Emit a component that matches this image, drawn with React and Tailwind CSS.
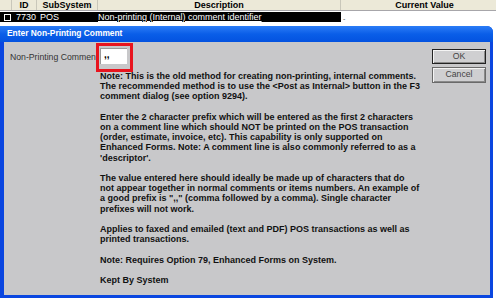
import React from "react";

const paras = [
  ["Note: This is the old method for creating non-printing, internal comments.", "The recommended method is to use the <Post as Internal> button in the F3", "comment dialog (see option 9294)."],
  ["Enter the 2 character prefix which will be entered as the first 2 characters", "on a comment line which should NOT be printed on the POS transaction", "(order, estimate, invoice, etc). This capability is only supported on", "Enhanced Forms. Note: A comment line is also commonly referred to as a", "'descriptor'."],
  ["The value entered here should ideally be made up of characters that do", "not appear together in normal comments or items numbers. An example of", "a good prefix is \",,\" (comma followed by a comma). Single character", "prefixes will not work."],
  ["Applies to faxed and emailed (text and PDF) POS transactions as well as", "printed transactions."],
  ["Note: Requires Option 79, Enhanced Forms on System."],
  ["Kept By System"],
];

export default function App() {
  return (
    <div className="w-[496px] h-[300px] overflow-hidden bg-white relative" style={{ fontFamily: '"Liberation Sans", Arial, sans-serif' }}>
      {/* grid header */}
      <div className="flex h-[11px] bg-[#ece9d8] border-b border-[#a7a6aa] text-[9px] font-bold text-black leading-[10px]">
        <div className="w-[12px] shrink-0 border-r border-[#c9c7ba]" />
        <div className="w-[25px] shrink-0 border-r border-[#c9c7ba] text-center">ID</div>
        <div className="w-[61px] shrink-0 border-r border-[#c9c7ba] text-center">SubSystem</div>
        <div className="w-[243px] shrink-0 border-r border-[#c9c7ba] text-center">Description</div>
        <div className="flex-1 text-center pl-[12px]">Current Value</div>
      </div>
      <div className="flex h-[10px] mt-[1px] text-[9px] leading-[10px]">
        <div className="w-[341px] shrink-0 bg-black text-white flex items-center">
          <div className="w-[14px] shrink-0 flex justify-center">
            <div className="w-[7px] h-[7px] border border-white bg-black" />
          </div>
          <div className="w-[24px] shrink-0 text-left pl-[2px]">7730</div>
          <div className="w-[60px] shrink-0 pl-[2px]">POS</div>
          <div className="flex-1 underline">Non-printing (Internal) comment identifier</div>
        </div>
        <div className="flex-1 bg-white text-[7px] pl-[2px] leading-[14px] text-[#555]">-</div>
      </div>
      {/* dialog */}
      <div className="absolute left-0 top-[26px] w-[493px] h-[272px] bg-[#0a46e0] rounded-tr-[6px] flex flex-col">
        <div className="h-[16px] shrink-0 bg-gradient-to-b from-[#2a7cf6] via-[#0a5ee8] to-[#0452e0] rounded-tr-[6px] pl-[7px] flex items-center pb-[1px] text-white font-bold text-[8.4px]">
          Enter Non-Printing Comment
        </div>
        <div className="flex-1 ml-[4px] mr-[3px] mb-[3px] bg-[#c8c8ca] relative flex">
          <div className="w-[92px] shrink-0 pl-[6px] pt-[10px] text-[8.7px] text-[#333] leading-[10px] whitespace-nowrap">Non-Printing Comment</div>
          <div className="flex-1 flex flex-col">
            <div className="mt-[1px] w-[37px] h-[29px] border-[3px] border-[#e8141e] pl-[1px] pt-[2px]">
              <div className="w-[27px] h-[16px] bg-white border-t border-l border-[#999] text-[10px] font-bold leading-[12px] pl-[3px]">,,</div>
            </div>
            <div className="mt-[-1px] pl-[4px] text-[9px] font-bold text-[#111] leading-[10.2px] flex flex-col gap-[10.2px]">
              {paras.map((p, i) => (
                <div key={i}>
                  {p.map((l, j) => (
                    <div key={j} className="whitespace-nowrap">{l}</div>
                  ))}
                </div>
              ))}
            </div>
          </div>
          <div className="absolute right-[4px] top-[7px] flex flex-col gap-[3px]">
            <div className="w-[54px] h-[15px] border border-[#222] bg-[#cfcfd1] text-[8.7px] text-[#444] flex items-center justify-center" style={{ boxShadow: "inset 1px 1px 0 #f4f4f4, inset -1px -1px 0 #8a8a8a" }}>OK</div>
            <div className="w-[54px] h-[16px] border border-[#6a6a6a] bg-[#cfcfd1] text-[8.7px] text-[#444] flex items-center justify-center" style={{ boxShadow: "inset 1px 1px 0 #f4f4f4, inset -1px -1px 0 #8a8a8a" }}>Cancel</div>
          </div>
        </div>
      </div>
    </div>
  );
}
